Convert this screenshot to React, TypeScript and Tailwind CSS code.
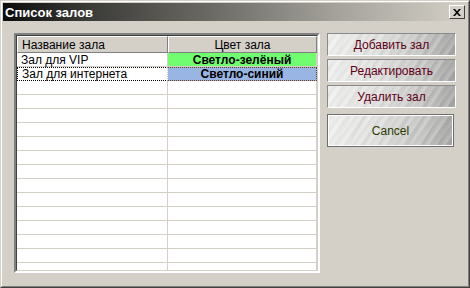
import React from "react";

const metal =
  "[background-image:repeating-linear-gradient(-55deg,rgba(255,255,255,0.18)_0px,rgba(255,255,255,0)_3px,rgba(0,0,0,0.04)_5px,rgba(255,255,255,0)_7px),repeating-linear-gradient(-62deg,rgba(0,0,0,0.03)_0px,rgba(0,0,0,0)_4px,rgba(255,255,255,0.12)_9px,rgba(0,0,0,0)_13px),linear-gradient(100deg,#f0f0ee_0%,#e0e0de_40%,#c4c4c2_75%,#a2a2a2_100%)]";

function Btn({ label, color, cls }: { label: string; color: string; cls: string }) {
  return (
    <div className={`flex items-center justify-center ${metal} ${cls}`} style={{ color }}>
      <span className="text-[12px] leading-none">{label}</span>
    </div>
  );
}

export default function App() {
  const rows: { name: string; color: string; bg: string; focus?: boolean }[] = [
    { name: "Зал для VIP", color: "Светло-зелёный", bg: "bg-[#70fe70]" },
    { name: "Зал для интернета", color: "Светло-синий", bg: "bg-[#99b5e3]", focus: true },
  ];
  const empty = Array.from({ length: 15 });

  return (
    <div className="w-[470px] h-[288px] bg-[#d4d0c8] border border-t-[#d4d0c8] border-l-[#d4d0c8] border-r-[#404040] border-b-[#404040] font-['Liberation_Sans',Arial,sans-serif] select-none">
      <div className="w-full h-full border border-t-white border-l-white border-r-[#808080] border-b-[#808080] p-px flex flex-col">
        {/* Title bar */}
        <div className="h-[18px] flex items-center justify-between pl-[2px] pr-[2px] bg-[linear-gradient(90deg,#0c0c0c_0%,#3a3a36_18%,#6c6a65_45%,#a4a29b_72%,#d4d0c8_100%)]">
          <span className="text-white font-bold text-[13px] leading-none">Список залов</span>
          <div className="w-[16px] h-[14px] bg-[#d4d0c8] border border-t-white border-l-white border-r-[#404040] border-b-[#404040] flex items-center justify-center">
            <svg width="8" height="7" viewBox="0 0 8 7">
              <path d="M0 0h2l2 2.2L6 0h2L5 3.5 8 7H6L4 4.8 2 7H0l3-3.5z" fill="#000" />
            </svg>
          </div>
        </div>

        {/* Content */}
        <div className="flex pl-[11px] pt-[12px] gap-[7px]">
          {/* Grid */}
          <div className="w-[306px] h-[240px] border-2 border-t-[#808080] border-l-[#808080] border-r-white border-b-white">
            <div className="w-full h-full border border-t-[#404040] border-l-[#404040] border-r-[#d4d0c8] border-b-[#d4d0c8] bg-white overflow-hidden flex flex-col text-[12px] text-black">
              <div className="flex h-[17px] shrink-0 bg-[#d4d0c8]">
                <div className="w-[151px] border border-t-white border-l-white border-r-[#808080] border-b-[#808080] flex items-center pl-[4px] leading-none">
                  Название зала
                </div>
                <div className="w-[149px] border border-t-white border-l-white border-r-[#808080] border-b-[#808080] flex items-center justify-center leading-none">
                  Цвет зала
                </div>
                <div className="flex-1" />
              </div>
              {rows.map((r, i) => (
                <div key={i} className="flex h-[14px] shrink-0">
                  <div
                    className={`w-[151px] border-r border-b border-[#d4d0c8] flex items-center pl-[4px] leading-none ${
                      r.focus ? "border-t border-l border-dotted border-t-black border-l-black border-b-black" : ""
                    }`}
                  >
                    {r.name}
                  </div>
                  <div
                    className={`w-[149px] border-r border-b border-[#d4d0c8] ${r.bg} flex items-center justify-center font-bold leading-none ${
                      r.focus ? "border-t border-dotted border-t-[#6b3a10] border-r-[#6b3a10] border-b-[#6b3a10]" : ""
                    }`}
                  >
                    {r.color}
                  </div>
                  <div className="flex-1 border-b border-[#d4d0c8]" />
                </div>
              ))}
              {empty.map((_, i) => (
                <div key={"e" + i} className="flex h-[14px] shrink-0">
                  <div className="w-[151px] border-r border-b border-[#d4d0c8]" />
                  <div className="w-[149px] border-r border-b border-[#d4d0c8]" />
                  <div className="flex-1 border-b border-[#d4d0c8]" />
                </div>
              ))}
            </div>
          </div>

          {/* Buttons */}
          <div className="flex flex-col w-[129px]">
            <Btn
              label="Добавить зал"
              color="#5e0018"
              cls="h-[23px] border border-t-[#8a8a8a] border-l-[#8a8a8a] border-r-white border-b-white"
            />
            <Btn
              label="Редактировать"
              color="#5e0018"
              cls="mt-[3px] h-[23px] border border-t-[#8a8a8a] border-l-[#8a8a8a] border-r-white border-b-white"
            />
            <Btn
              label="Удалить зал"
              color="#5e0018"
              cls="mt-[3px] h-[23px] border border-t-[#8a8a8a] border-l-[#8a8a8a] border-r-white border-b-white"
            />
            <Btn
              label="Cancel"
              color="#2c3c00"
              cls="mt-[6px] w-[127px] h-[33px] border border-[#6e6e6e] shadow-[inset_-1px_-1px_0_#ffffff,inset_1px_1px_0_#ffffff]"
            />
          </div>
        </div>
      </div>
    </div>
  );
}
